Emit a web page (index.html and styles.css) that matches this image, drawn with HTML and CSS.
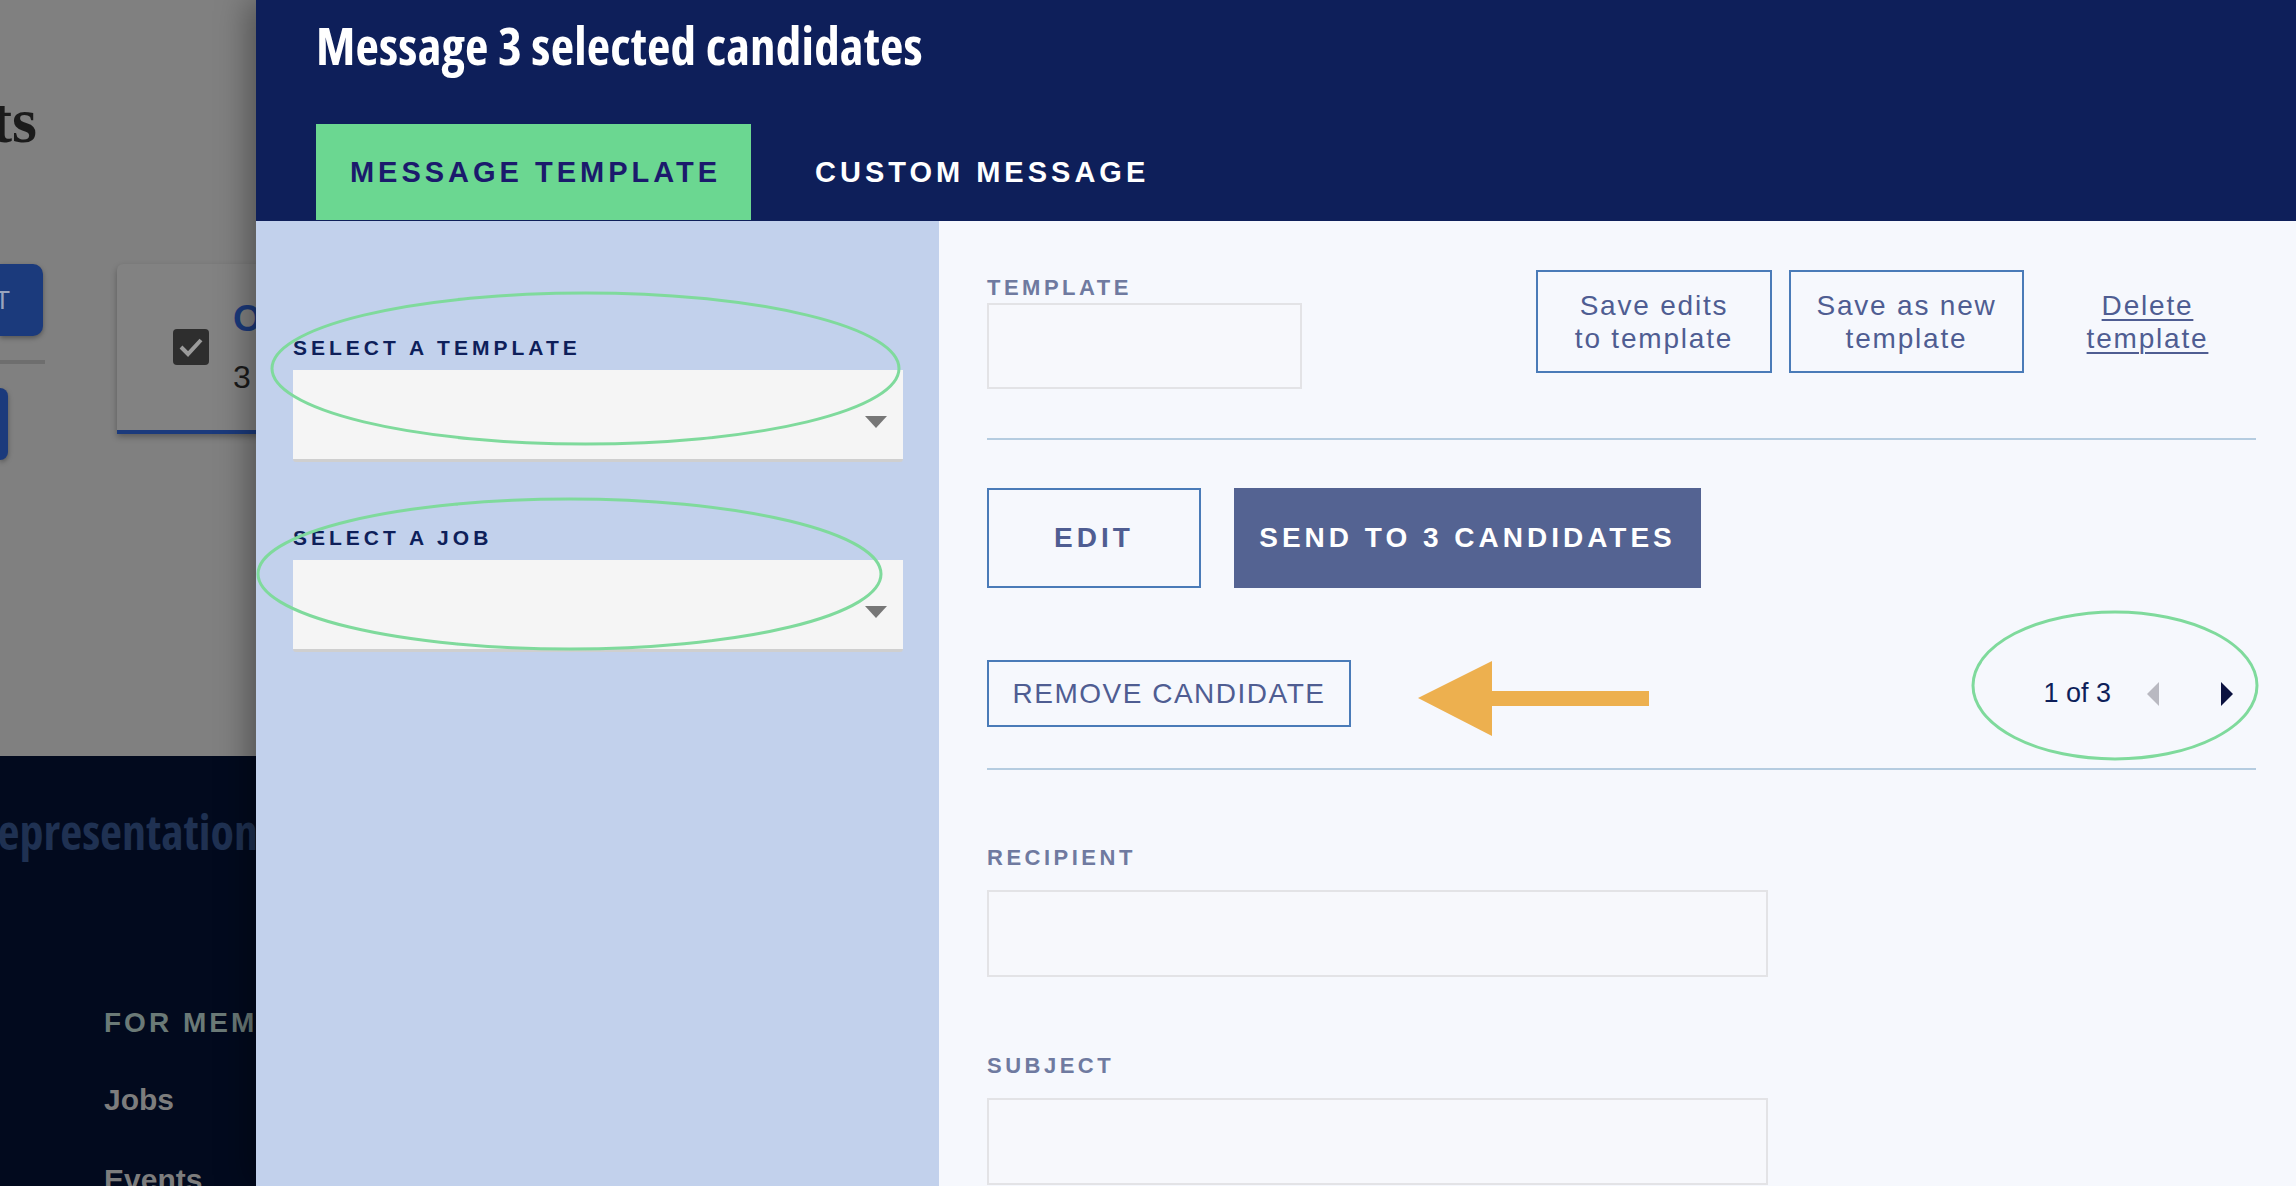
FILE: index.html
```html
<!DOCTYPE html>
<html lang="en">
<head>
<meta charset="utf-8">
<title>Message candidates</title>
<link rel="stylesheet" href="styles.css">
</head>
<body>
<div class="page">
  <div class="page-main">
    <div class="title-clip"><h1 class="page-title">Applicants</h1></div>
    <div class="page-row">
      <div class="side-tools">
        <div class="blue-btn"><span>MESSAGE SELECT</span></div>
        <div class="rule"></div>
        <div class="blue-btn small"></div>
      </div>
      <div class="cand-card">
        <span class="checkbox">
          <svg width="36" height="36" viewBox="0 0 36 36"><polyline points="8,18 15,25 28,11" fill="none" stroke="#9b9b9b" stroke-width="4"/></svg>
        </span>
        <div class="cand-info">
          <div class="cand-name">Olivia Martinez</div>
          <div class="cand-sub">3 years experience</div>
        </div>
      </div>
    </div>
  </div>
  <footer class="page-footer">
    <p class="footer-tag">Representation matters in every newsroom</p>
    <h4 class="footer-head">FOR MEMBERS</h4>
    <div class="footer-links">
      <a class="footer-link">Jobs</a>
      <a class="footer-link">Events</a>
    </div>
  </footer>
</div>

<div class="modal">
  <header class="modal-header">
    <h2 class="modal-title">Message 3 selected candidates</h2>
    <nav class="tabs">
      <a class="tab active">MESSAGE TEMPLATE</a>
      <a class="tab">CUSTOM MESSAGE</a>
    </nav>
  </header>
  <div class="modal-body">
    <aside class="pane-left">
      <div class="select-group">
        <label class="select-label">SELECT A TEMPLATE</label>
        <div class="select-box"><span class="caret"></span></div>
      </div>
      <div class="select-group second">
        <label class="select-label">SELECT A JOB</label>
        <div class="select-box"><span class="caret"></span></div>
      </div>
    </aside>
    <section class="pane-right">
      <div class="tpl-row">
        <div class="field field-tpl">
          <label class="field-label">TEMPLATE</label>
          <div class="input input-tpl"></div>
        </div>
        <div class="tpl-actions">
          <button class="outline-btn two-line w236">Save edits<br>to template</button>
          <button class="outline-btn two-line w235">Save as new<br>template</button>
          <a class="delete-link"><span>Delete<br>template</span></a>
        </div>
      </div>
      <div class="divider"></div>
      <div class="action-row">
        <button class="outline-btn strong edit-btn">EDIT</button>
        <button class="solid-btn">SEND TO 3 CANDIDATES</button>
      </div>
      <div class="cand-row">
        <button class="outline-btn remove-btn">REMOVE CANDIDATE</button>
        <div class="pager">
          <span class="pager-count">1 of 3</span>
          <span class="tri tri-left"></span>
          <span class="tri tri-right"></span>
        </div>
      </div>
      <div class="divider second"></div>
      <div class="field field-wide">
        <label class="field-label">RECIPIENT</label>
        <div class="input input-wide"></div>
      </div>
      <div class="field field-wide">
        <label class="field-label">SUBJECT</label>
        <div class="input input-wide"></div>
      </div>
    </section>
  </div>
  <svg class="annotations" width="2040" height="1186" viewBox="0 0 2040 1186">
    <ellipse cx="329.5" cy="368.5" rx="313.5" ry="75.5" fill="none" stroke="#7fda9c" stroke-width="3"/>
    <ellipse cx="313.5" cy="574" rx="311.5" ry="75" fill="none" stroke="#7fda9c" stroke-width="3"/>
    <ellipse cx="1859" cy="685.5" rx="142" ry="73.5" fill="none" stroke="#7fda9c" stroke-width="3"/>
    <polygon points="1162,698 1236,661 1236,691 1393,691 1393,706 1236,706 1236,736" fill="#edb04f"/>
  </svg>
</div>
</body>
</html>
```

FILE: styles.css
```css
html, body {
  margin: 0;
  padding: 0;
  width: 2296px;
  height: 1186px;
  overflow: hidden;
}

body {
  font-family: "Liberation Sans", Arial, sans-serif;
}

/* ---------- background page (dimmed) ---------- */
.page {
  width: 2296px;
  height: 1186px;
  display: flex;
  flex-direction: column;
  background: #808080;
}

.page-main {
  height: 756px;
  flex-shrink: 0;
  padding-top: 89px;
  box-sizing: border-box;
}

.title-clip {
  width: 37px;
  display: flex;
  justify-content: flex-end;
  overflow: hidden;
}

.page-title {
  margin: 0;
  font-family: "Liberation Serif", "Times New Roman", serif;
  font-weight: bold;
  font-size: 64px;
  line-height: 64px;
  color: #1b1b1b;
  white-space: nowrap;
}

.page-row {
  display: flex;
  margin-top: 111px;
}

.side-tools {
  width: 45px;
  display: flex;
  flex-direction: column;
}

.blue-btn {
  width: 43px;
  height: 72px;
  box-sizing: border-box;
  padding-right: 33px;
  background: #1b3a7c;
  border-radius: 0 10px 10px 0;
  box-shadow: 0 2px 5px rgba(0, 0, 0, 0.35);
  display: flex;
  justify-content: flex-end;
  align-items: center;
  overflow: hidden;
  color: #9aa4bd;
  font-size: 25px;
  white-space: nowrap;
}

.blue-btn.small {
  width: 8px;
  padding: 0;
  margin-top: 24px;
  border-radius: 0 8px 8px 0;
}

.rule {
  margin-top: 24px;
  width: 45px;
  height: 4px;
  background: #6e6e6e;
}

.cand-card {
  margin-left: 72px;
  width: 320px;
  height: 170px;
  box-sizing: border-box;
  padding: 33px 0 0 56px;
  background: #828282;
  border-radius: 6px 6px 0 0;
  border-bottom: 4px solid #1b3a7c;
  box-shadow: 0 3px 6px rgba(0, 0, 0, 0.3);
  display: flex;
  align-items: flex-start;
  gap: 24px;
}

.checkbox {
  margin-top: 32px;
  width: 36px;
  height: 36px;
  background: #2e2e2e;
  border-radius: 4px;
  display: block;
}

.checkbox svg { display: block; }

.cand-name {
  font-size: 37px;
  line-height: 44px;
  font-weight: bold;
  color: #1b3a7c;
  white-space: nowrap;
}

.cand-sub {
  margin-top: 16px;
  font-size: 32px;
  line-height: 40px;
  color: #1a1a1a;
  white-space: nowrap;
}

.page-footer {
  flex: 1;
  min-height: 0;
  overflow: hidden;
  background: #020a1e;
  padding-top: 51px;
  box-sizing: border-box;
}

.footer-tag {
  margin: 0 0 0 -27px;
  font-family: "Open Sans", "Liberation Sans", sans-serif;
  font-stretch: 75%;
  font-weight: bold;
  font-size: 48px;
  line-height: 50px;
  color: #1f3152;
  white-space: nowrap;
}

.footer-head {
  margin: 150px 0 0 104px;
  font-size: 28px;
  line-height: 32px;
  font-weight: bold;
  letter-spacing: 3px;
  color: #6b7a77;
  white-space: nowrap;
}

.footer-links {
  margin: 44px 0 0 104px;
  display: flex;
  flex-direction: column;
  gap: 46px;
}

.footer-link {
  font-size: 30px;
  line-height: 34px;
  font-weight: bold;
  color: #7d7d7d;
}

/* ---------- modal ---------- */
.modal {
  position: fixed;
  top: 0;
  left: 256px;
  right: 0;
  bottom: 0;
  display: flex;
  flex-direction: column;
  box-shadow: -8px 0 30px rgba(0, 0, 0, 0.35);
}

.modal-header {
  height: 221px;
  box-sizing: border-box;
  background: #0e1f5a;
  padding-left: 60px;
}

.modal-title {
  margin: 0;
  height: 124px;
  box-sizing: border-box;
  padding-top: 20px;
  font-family: "Open Sans", "Liberation Sans", sans-serif;
  font-stretch: 75%;
  font-weight: bold;
  font-size: 51px;
  letter-spacing: 0.2px;
  line-height: 50px;
  color: #ffffff;
  white-space: nowrap;
}

.tabs {
  display: flex;
  gap: 31px;
  height: 96px;
}

.tab {
  display: flex;
  align-items: center;
  justify-content: center;
  padding: 0 29px 0 33px;
  font-size: 29px;
  font-weight: bold;
  letter-spacing: 4px;
  color: #ffffff;
  white-space: nowrap;
}

.tab.active {
  width: 435px;
  box-sizing: border-box;
  background: #6bd791;
  color: #1b1a6c;
}

.modal-body {
  flex: 1;
  display: flex;
  min-height: 0;
}

.pane-left {
  width: 683px;
  box-sizing: border-box;
  padding: 115px 36px 0 37px;
  background: #c2d1ec;
}

.select-group.second {
  margin-top: 64px;
}

.select-label {
  display: block;
  font-size: 21px;
  line-height: 24px;
  font-weight: bold;
  letter-spacing: 4px;
  color: #0e1f5a;
  white-space: nowrap;
}

.select-box {
  margin-top: 10px;
  height: 92px;
  box-sizing: border-box;
  background: #f5f5f5;
  border-bottom: 3px solid #cfcfcf;
  border-radius: 0 0 3px 3px;
  display: flex;
  justify-content: flex-end;
  align-items: center;
  padding: 14px 16px 0 0;
}

.caret {
  width: 0;
  height: 0;
  border-left: 11px solid transparent;
  border-right: 11px solid transparent;
  border-top: 12px solid #777777;
}

.pane-right {
  flex: 1;
  box-sizing: border-box;
  padding: 49px 40px 0 48px;
  background: #f6f8fd;
}

.tpl-row {
  display: flex;
  align-items: flex-start;
}

.field-tpl {
  padding-top: 6px;
}

.field-label {
  display: block;
  font-size: 22px;
  line-height: 24px;
  font-weight: bold;
  letter-spacing: 3.5px;
  color: #6f7aa0;
  white-space: nowrap;
}

.input {
  box-sizing: border-box;
  border: 2px solid #e3e3e6;
  background: #f7f8fc;
}

.input-tpl {
  margin-top: 3px;
  width: 315px;
  height: 86px;
}

.tpl-actions {
  margin-left: auto;
  display: flex;
  gap: 17px;
  margin-right: 43px;
}

.outline-btn {
  box-sizing: border-box;
  border: 2px solid #4a7bb8;
  background: transparent;
  color: #4f5d92;
  font-family: "Liberation Sans", Arial, sans-serif;
  padding: 0;
  margin: 0;
}

.two-line {
  height: 103px;
  font-size: 28px;
  line-height: 33px;
  letter-spacing: 1.8px;
}

.w236 { width: 236px; }
.w235 { width: 235px; }

.delete-link {
  margin-left: 41px;
  width: 131px;
  height: 103px;
  display: flex;
  align-items: center;
  justify-content: center;
  text-align: center;
  font-size: 28px;
  line-height: 33px;
  letter-spacing: 1.8px;
  color: #4f5d92;
  text-decoration: underline;
  text-decoration-thickness: 2px;
  text-underline-offset: 4px;
  white-space: nowrap;
}

.divider {
  margin-top: 49px;
  height: 2px;
  background: #b5cce0;
}

.divider.second {
  margin-top: 41px;
}

.action-row {
  margin-top: 48px;
  display: flex;
  gap: 33px;
}

.strong {
  font-weight: bold;
  font-size: 28px;
  letter-spacing: 4px;
}

.edit-btn {
  width: 214px;
  height: 100px;
}

.solid-btn {
  width: 467px;
  height: 100px;
  border: none;
  margin: 0;
  padding: 0;
  background: #546392;
  color: #ffffff;
  font-family: "Liberation Sans", Arial, sans-serif;
  font-weight: bold;
  font-size: 28px;
  letter-spacing: 4px;
}

.cand-row {
  margin-top: 72px;
  display: flex;
  align-items: center;
  justify-content: space-between;
}

.remove-btn {
  width: 364px;
  height: 67px;
  font-size: 28px;
  letter-spacing: 1.5px;
}

.pager {
  margin-right: 23px;
  display: flex;
  align-items: center;
}

.pager-count {
  font-size: 27px;
  color: #0e1f5a;
  white-space: nowrap;
}

.tri {
  width: 0;
  height: 0;
  border-top: 12px solid transparent;
  border-bottom: 12px solid transparent;
}

.tri-left {
  margin-left: 36px;
  border-right: 12px solid #b9b9c1;
}

.tri-right {
  margin-left: 62px;
  border-left: 12px solid #0b1240;
}

.field-wide {
  margin-top: 76px;
}

.field-wide + .field-wide {
  margin-top: 77px;
}

.input-wide {
  margin-top: 20px;
  width: 781px;
  height: 87px;
}

.annotations {
  position: absolute;
  top: 0;
  left: 0;
  pointer-events: none;
}
```
